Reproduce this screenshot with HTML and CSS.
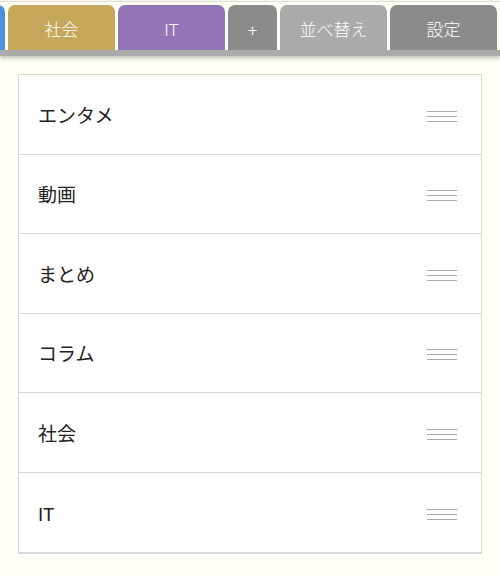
FILE: index.html
```html
<!DOCTYPE html>
<html lang="ja">
<head>
<meta charset="utf-8">
<meta name="viewport" content="width=device-width, initial-scale=1">
<title>並べ替え</title>
<link rel="stylesheet" href="styles.css">
</head>
<body>
<nav class="tabs">
  <span class="tab tab-blue"></span>
  <button class="tab tab-gold" type="button">社会</button>
  <button class="tab tab-purple" type="button">IT</button>
  <button class="tab tab-dark tab-add" type="button">+</button>
  <button class="tab tab-active" type="button">並べ替え</button>
  <button class="tab tab-dark" type="button">設定</button>
</nav>
<main class="content">
  <ul class="list">
    <li class="row"><span class="label">エンタメ</span><svg class="handle" viewBox="0 0 30 12"><path d="M0 1.5h30M0 6.5h30M0 11.5h30"/></svg></li>
    <li class="row"><span class="label">動画</span><svg class="handle" viewBox="0 0 30 12"><path d="M0 1.5h30M0 6.5h30M0 11.5h30"/></svg></li>
    <li class="row"><span class="label">まとめ</span><svg class="handle" viewBox="0 0 30 12"><path d="M0 1.5h30M0 6.5h30M0 11.5h30"/></svg></li>
    <li class="row"><span class="label">コラム</span><svg class="handle" viewBox="0 0 30 12"><path d="M0 1.5h30M0 6.5h30M0 11.5h30"/></svg></li>
    <li class="row"><span class="label">社会</span><svg class="handle" viewBox="0 0 30 12"><path d="M0 1.5h30M0 6.5h30M0 11.5h30"/></svg></li>
    <li class="row"><span class="label">IT</span><svg class="handle" viewBox="0 0 30 12"><path d="M0 1.5h30M0 6.5h30M0 11.5h30"/></svg></li>
  </ul>
</main>
</body>
</html>
```
FILE: styles.css
```css
* {
  box-sizing: border-box;
}

body {
  display: flex;
  flex-direction: column;
  min-height: 100vh;
  margin: 0;
  padding-top: 1px;
  background: #fefef5;
  color: #222;
  font-family: Roboto, "Noto Sans CJK JP", sans-serif;
}

.tabs {
  display: flex;
  justify-content: flex-end;
  gap: 3px;
  padding: 3px 3px 0 0;
  overflow: hidden;
  border-top: 1px solid #dededa;
  border-bottom: 6px solid #aaa;
  box-shadow: 0 2px 4px rgba(0, 0, 0, 0.25);
}

.tab {
  flex: none;
  width: 107px;
  height: 45px;
  padding: 4px 0 0;
  border: 0;
  border-radius: 7px 7px 0 0;
  color: #fff;
  font-family: inherit;
  font-size: 17px;
  font-weight: 300;
  line-height: 24px;
}

.tab-add {
  width: 49px;
}

.tab-blue {
  background: #4b93dd;
}

.tab-gold {
  background: #c7a75a;
}

.tab-purple {
  background: #9274b7;
}

.tab-dark {
  background: #8b8b8b;
}

.tab-active {
  background: #aaa;
}

.content {
  display: flex;
  flex: 1;
  padding: 18px 18px 21px;
}

.list {
  display: grid;
  flex: 1;
  grid-auto-rows: 1fr;
  margin: 0;
  padding: 0;
  border: 1px solid #d9d9d9;
  border-bottom: 2px solid #dadada;
  background: #fff;
  list-style: none;
}

.row {
  display: flex;
  align-items: center;
  justify-content: space-between;
  min-height: 72px;
  padding: 3px 24px 0 19px;
  font-size: 19px;
  line-height: 28px;
}

.row:not(:last-child) {
  border-bottom: 1px solid #d9d9d9;
}

.label {
  padding-top: 2px;
}

.handle {
  width: 30px;
  height: 12px;
  fill: none;
  stroke: #aaa;
  stroke-width: 1;
}
```
